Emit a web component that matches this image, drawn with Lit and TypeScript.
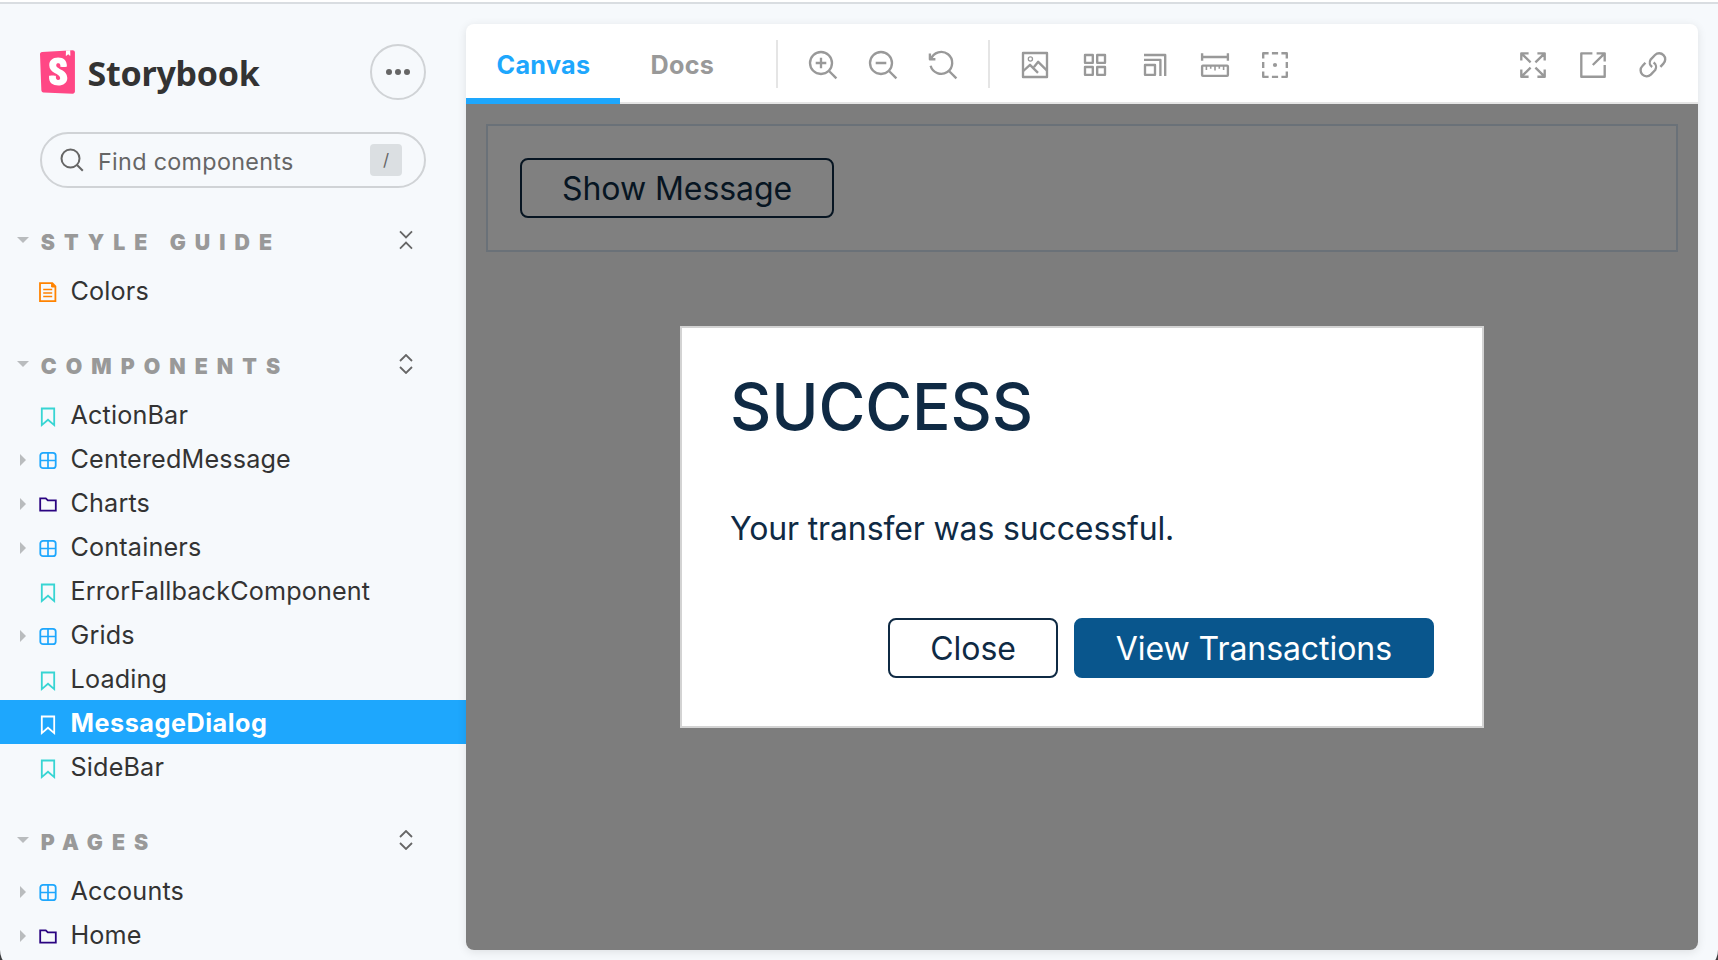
import { LitElement, html, svg, css, SVGTemplateResult } from "lit";
import { customElement, property } from "lit/decorators.js";
import { classMap } from "lit/directives/class-map.js";

type Kind = "document" | "story" | "component" | "folder";
interface Item { name: string; kind: Kind; selected?: boolean }
interface Section { title: string; expanded: boolean; items: Item[] }

const SECTIONS: Section[] = [
  { title: "STYLE GUIDE", expanded: true, items: [{ name: "Colors", kind: "document" }] },
  {
    title: "COMPONENTS",
    expanded: false,
    items: [
      { name: "ActionBar", kind: "story" },
      { name: "CenteredMessage", kind: "component" },
      { name: "Charts", kind: "folder" },
      { name: "Containers", kind: "component" },
      { name: "ErrorFallbackComponent", kind: "story" },
      { name: "Grids", kind: "component" },
      { name: "Loading", kind: "story" },
      { name: "MessageDialog", kind: "story", selected: true },
      { name: "SideBar", kind: "story" },
    ],
  },
  {
    title: "PAGES",
    expanded: false,
    items: [
      { name: "Accounts", kind: "component" },
      { name: "Home", kind: "folder" },
    ],
  },
];

const KIND_ICONS: Record<Kind, SVGTemplateResult> = {
  document: svg`<path d="M1 2.2h12.3L16.4 5.4v14.8H1z"/><path d="M12.6 2.2V6H16.4z" fill="currentColor" stroke-width="1"/><path d="M4.2 8.4h9M4.2 12h9M4.2 15.6h9" stroke-width="1.5"/>`,
  story: svg`<path d="M2.8 3.5h12.4v16.6L9 14.7l-6.2 5.4z"/>`,
  component: svg`<rect x="1.3" y="3.8" width="15.4" height="15.4" rx="2.8"/><path d="M9 3.8v15.4M1.3 11.5h15.4" stroke-width="1.7"/>`,
  folder: svg`<path d="M1.2 5.3h5.6l2 2h8v10.3H1.2z"/>`,
};

const handle = svg`<path d="M20 20l7.4 7.4"/>`;
const TOOL_ICONS: Record<string, SVGTemplateResult> = {
  zoomin: svg`<circle cx="12" cy="12" r="11"/><path d="M12 6.7v10.6M6.7 12h10.6"/>${handle}`,
  zoomout: svg`<circle cx="12" cy="12" r="11"/><path d="M6.7 12h10.6"/>${handle}`,
  zoomreset: svg`<path d="M1.9 8A11 11 0 1 1 1.6 14.8"/><path d="M.9 2.6V8.2H6.4"/>${handle}`,
  image: svg`<rect x="2" y="2" width="24" height="24"/><circle cx="9.4" cy="8" r="2.1" stroke-width="1.3"/><path d="M2.3 20L9 13.8l8 8M13 16l4.2-5.2 8.6 8.6"/>`,
  grid: svg`<rect x="4" y="4" width="7.8" height="7.8"/><rect x="16.2" y="4" width="7.8" height="7.8"/><rect x="4" y="16" width="7.8" height="7.8"/><rect x="16.2" y="16" width="7.8" height="7.8"/>`,
  grow: svg`<path d="M3 4h21.2v21M3 8.8h16.4V25"/><rect x="4" y="14" width="10" height="9.8"/>`,
  measure: svg`<path d="M1.1 2.3v7.4M26.9 2.3v7.4M1 6h26"/><rect x="1.1" y="14.6" width="25.8" height="10.2" rx=".8"/><path d="M5.4 15v4M9.7 15v2.8M14 15v4.6M18.3 15v2.8M22.6 15v4" stroke-width="1.6"/>`,
  outline: svg`<path d="M2.2 7.6V2.2h5.4M20.4 2.2h5.4v5.4M25.8 20.4v5.4h-5.4M7.6 25.8H2.2v-5.4M10.9 2.2h6.2M10.9 25.8h6.2M2.2 10.9v6.2M25.8 10.9v6.2"/><circle cx="14" cy="14" r="2.1" fill="currentColor" stroke="none"/>`,
  expand: svg`<path d="M2.3 9.6V2.3h7.3M2.6 2.6l9 8.8M18.4 2.3h7.3v7.3M25.4 2.6l-9 8.8M2.3 18.4v7.3h7.3M2.6 25.4l9-8.8M25.7 18.4v7.3h-7.3M25.4 25.4l-9-8.8"/>`,
  share: svg`<path d="M13.4 2.3H2.3v23.4h23.4V14M17.6 2.3h8.1v8.1M25.4 2.6L13.8 14"/>`,
  link: svg`<path d="M21.4 15.9l3-3.3A5.9 5.9 0 0 0 16 4l-4.4 4.6A5.4 5.4 0 0 0 13.2 16"/><path d="M21.4 15.9l3-3.3A5.9 5.9 0 0 0 16 4l-4.4 4.6A5.4 5.4 0 0 0 13.2 16" transform="rotate(180 13.9 13.8)"/>`,
};

@customElement("tool-button")
class ToolButton extends LitElement {
  @property() name = "";
  static styles = css`
    :host { display: block; width: 28px; height: 28px; color: #999; }
    .glyph { display: block; fill: none; stroke: currentColor; stroke-width: 2.35; stroke-linecap: butt; stroke-linejoin: round; overflow: visible; }
  `;
  render() {
    return html`<svg class="glyph" width="28" height="28" viewBox="0 0 28 28">${TOOL_ICONS[this.name]}</svg>`;
  }
}

@customElement("side-bar")
class SideBar extends LitElement {
  static styles = css`
    :host { display: block; width: 466px; flex: none; box-sizing: border-box; padding-top: 40px; color: #333; }
    .brand { display: flex; align-items: center; justify-content: space-between; height: 56px; padding: 0 40px; }
    .logo { display: flex; align-items: center; gap: 12.5px; }
    .mark { display: block; }
    .word { font: 700 34px/44px "Noto Sans", sans-serif; letter-spacing: -0.25px; padding-top: 1px; }
    .more { box-sizing: border-box; width: 56px; height: 56px; border: 2px solid #d0d3d6; border-radius: 50%; display: flex; align-items: center; justify-content: center; gap: 3px; }
    .dot { width: 6px; height: 6px; border-radius: 50%; background: #666; }
    .search { box-sizing: border-box; margin: 32px 40px 40px; height: 56px; border: 2px solid #d0d3d6; border-radius: 28px; display: flex; align-items: center; padding: 0 22px 0 18px; color: #666; }
    .lens { display: block; flex: none; fill: none; stroke: #666; stroke-width: 2; }
    .hint { flex: 1; padding: 3px 0 0 14px; font-size: 23.3px; letter-spacing: 0.33px; }
    .key { width: 32px; height: 32px; border-radius: 4px; background: #dbdfe2; text-align: center; font-size: 17px; line-height: 33px; }
    .section { margin-bottom: 40px; }
    .head { display: flex; align-items: center; height: 24px; margin-bottom: 16px; padding: 0 53px 0 17px; }
    .down { width: 12px; height: 6px; background: #b9bcbe; clip-path: polygon(0 0, 100% 0, 50% 100%); }
    .title { flex: 1; padding: 4px 0 0 11.8px; font-size: 21.3px; font-weight: 900; letter-spacing: 9.05px; color: #999; }
    .fold { display: block; fill: none; stroke: #666; stroke-width: 1.8; }
    .row { display: flex; align-items: center; height: 44px; padding-left: 20px; font-size: 25.2px; letter-spacing: 0.15px; }
    .row.selected { background: #1ea7fd; color: #fff; font-weight: 700; letter-spacing: 0.53px; }
    .right { width: 6px; height: 12px; margin: 4px 13px 0 0; flex: none; }
    .right.shown { background: #b9bcbe; clip-path: polygon(0 0, 100% 50%, 0 100%); }
    .kind { display: block; flex: none; margin-top: 4px; fill: none; stroke: currentColor; stroke-width: 1.8; }
    .document { color: #ff8300; }
    .story { color: #37d5d3; }
    .component { color: #1ea7fd; }
    .folder { color: #2a0481; }
    .selected .kind { color: #fff; }
    .name { padding: 2px 0 0 13.5px; }
  `;
  render() {
    return html`
      <div class="brand">
        <div class="logo">
          <svg class="mark" width="35" height="44" viewBox="0 0 256 319">
            <path fill="#ff4785" d="M9.872 293.324L.012 30.574C-.315 21.895 6.338 14.54 15.005 14L238.494.032c8.822-.552 16.42 6.153 16.972 14.975.02.332.031.665.031.998v286.314c0 8.839-7.165 16.004-16.004 16.004-.24 0-.48-.005-.718-.016L25.148 308.73c-8.323-.373-14.978-7.1-15.276-15.405z"/>
            <path fill="#fff" d="M188.665 39.127l1.527-36.716L220.884 0l1.322 37.863a2.387 2.387 0 01-3.864 1.96l-11.835-9.325-14.013 10.63a2.387 2.387 0 01-3.829-2.001zM149.413 119.98c0 6.226 41.942 3.243 47.572-1.131 0-42.402-22.752-64.684-64.415-64.684-41.662 0-65.005 22.628-65.005 56.57 0 59.117 79.78 60.249 79.78 92.494 0 9.052-4.433 14.426-14.184 14.426-12.705 0-17.729-6.49-17.138-28.552 0-4.786-48.458-6.278-49.936 0-3.762 53.466 29.548 68.887 67.665 68.887 36.935 0 65.892-19.687 65.892-55.326 0-63.36-80.961-61.663-80.961-93.06 0-12.729 9.455-14.426 15.07-14.426 5.909 0 16.545 1.042 15.66 24.801z"/>
          </svg>
          <span class="word">Storybook</span>
        </div>
        <div class="more"><i class="dot"></i><i class="dot"></i><i class="dot"></i></div>
      </div>
      <div class="search">
        <svg class="lens" width="24" height="24" viewBox="0 0 24 24"><circle cx="10.5" cy="10.5" r="9"/><path d="M16.8 16.8l6 6"/></svg>
        <span class="hint">Find components</span>
        <span class="key">/</span>
      </div>
      ${SECTIONS.map(
        (s) => html`<div class="section">
          <div class="head">
            <i class="down"></i><span class="title">${s.title}</span>
            <svg class="fold" width="14" height="20" viewBox="0 0 14 20">
              ${s.expanded ? svg`<path d="M1 1.4l6 6 6-6M1 18.6l6-6 6 6"/>` : svg`<path d="M1 7l6-6 6 6M1 13l6 6 6-6"/>`}
            </svg>
          </div>
          ${s.items.map(
            (i) => html`<div class=${classMap({ row: true, selected: !!i.selected })}>
              <i class=${classMap({ right: true, shown: i.kind === "component" || i.kind === "folder" })}></i>
              <svg class="kind ${i.kind}" width="18" height="23" viewBox="0 0 18 23">${KIND_ICONS[i.kind]}</svg>
              <span class="name">${i.name}</span>
            </div>`
          )}
        </div>`
      )}
    `;
  }
}

@customElement("push-button")
class PushButton extends LitElement {
  @property({ type: Boolean }) primary = false;
  static styles = css`
    :host { display: block; }
    .btn { display: block; box-sizing: border-box; height: 60px; padding: 0 40px; border: 2px solid currentColor; border-radius: 8px; background: transparent; color: inherit; font: 400 32px/58px Inter, sans-serif; letter-spacing: -0.06px; white-space: nowrap; }
    .primary { background: #09568d; border-color: #09568d; color: #fff; }
  `;
  render() {
    return html`<button class=${classMap({ btn: true, primary: this.primary })}><slot></slot></button>`;
  }
}

@customElement("app-root")
class AppRoot extends LitElement {
  static styles = css`
    :host { display: block; height: 960px; overflow: hidden; background: #3c3d3f; font-family: Inter, "Liberation Sans", sans-serif; }
    .window { height: 970px; box-sizing: border-box; border-radius: 0 0 20px 20px; overflow: hidden; background: #f6f9fc; display: flex; flex-direction: column; }
    .edge { height: 2px; flex: none; background: #fff; border-bottom: 2px solid #d9dde1; }
    .layout { display: flex; flex: 1; min-height: 0; }
    .panel { width: 1232px; height: 926px; margin-top: 20px; border-radius: 8px; box-shadow: 0 2px 10px rgba(0, 0, 0, 0.1); overflow: hidden; display: flex; flex-direction: column; background: #fff; }
    .bar { display: flex; align-items: center; height: 80px; box-sizing: border-box; flex: none; box-shadow: inset 0 -2px 0 #e5e5e5; padding-right: 31px; }
    .tab { box-sizing: border-box; height: 80px; padding: 0 30.5px; font-size: 25.2px; font-weight: 700; letter-spacing: 0.3px; line-height: 83px; color: #999; }
    .active { width: 154px; color: #1ea7fd; box-shadow: inset 0 -6px 0 #1ea7fd; }
    .docs { width: 156px; }
    .rule { width: 2px; height: 48px; background: #e5e5e5; margin-right: 31px; }
    .group { display: flex; gap: 32px; margin-right: 31px; padding-top: 2px; }
    .end { margin: 0 0 0 auto; }
    .canvas { position: relative; flex: 1; padding: 20px; background: #7d7d7d; }
    .frame { box-sizing: border-box; height: 128px; border: 2px solid #6a7178; background: #808080; padding: 32px; display: flex; align-items: flex-start; color: #071522; }
    .overlay { position: absolute; inset: 0; display: flex; align-items: center; justify-content: center; }
    .dialog { box-sizing: border-box; width: 804px; height: 402px; border: 2px solid #d3d3d3; background: #fff; padding: 48px; color: #0f2a44; }
    .heading { margin: 0 0 71px; font-size: 64px; font-weight: 550; line-height: 62px; letter-spacing: -0.15px; }
    .message { margin: 0 0 69px; font-size: 32px; line-height: 40px; letter-spacing: -0.13px; }
    .actions { display: flex; justify-content: flex-end; gap: 16px; }
  `;
  render() {
    const tools = (names: string[]) => names.map((n) => html`<tool-button name=${n}></tool-button>`);
    return html`<div class="window">
      <div class="edge"></div>
      <div class="layout">
        <side-bar></side-bar>
        <main class="panel">
          <div class="bar">
            <div class="tab active">Canvas</div>
            <div class="tab docs">Docs</div>
            <div class="rule"></div>
            <div class="group">${tools(["zoomin", "zoomout", "zoomreset"])}</div>
            <div class="rule"></div>
            <div class="group">${tools(["image", "grid", "grow", "measure", "outline"])}</div>
            <div class="group end">${tools(["expand", "share", "link"])}</div>
          </div>
          <div class="canvas">
            <div class="frame"><push-button>Show Message</push-button></div>
            <div class="overlay">
              <section class="dialog">
                <h1 class="heading">SUCCESS</h1>
                <p class="message">Your transfer was successful.</p>
                <div class="actions">
                  <push-button>Close</push-button>
                  <push-button primary>View Transactions</push-button>
                </div>
              </section>
            </div>
          </div>
        </main>
      </div>
    </div>`;
  }
}
